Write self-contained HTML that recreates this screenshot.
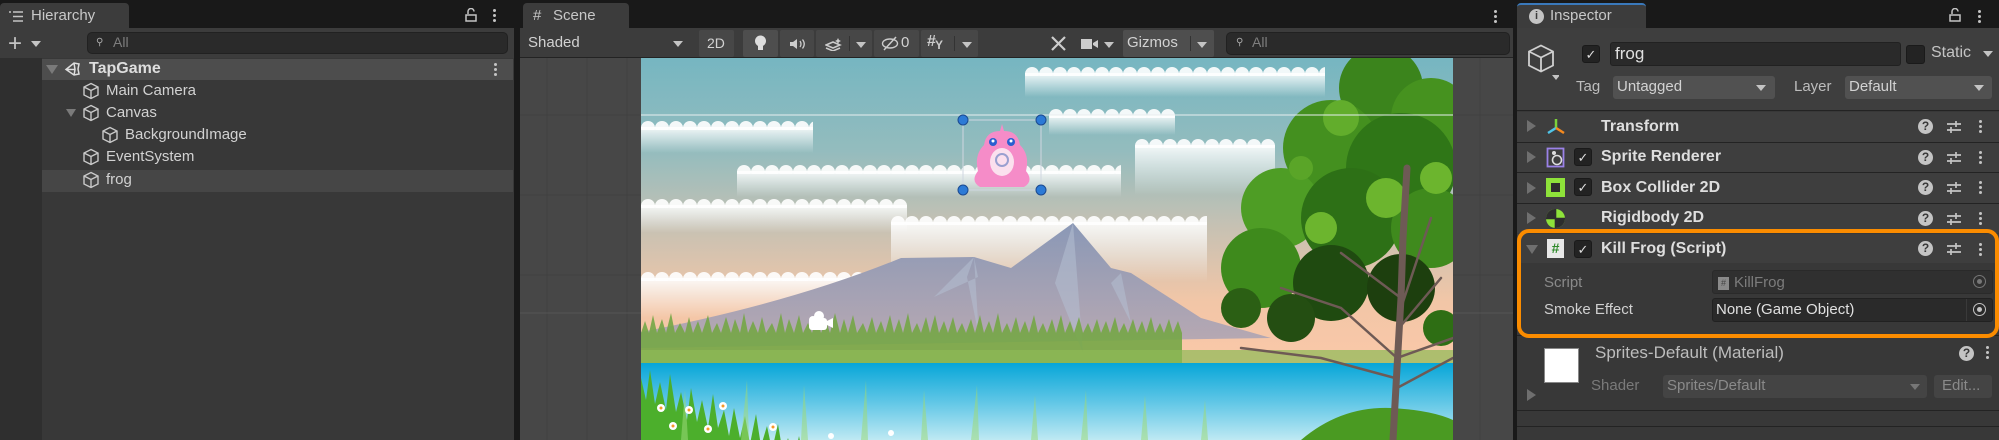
<!DOCTYPE html>
<html><head><meta charset="utf-8"><style>
*{box-sizing:border-box;margin:0;padding:0}
html,body{width:1999px;height:440px;overflow:hidden}
body{background:#191919;font-family:"Liberation Sans",sans-serif;color:#d2d2d2;font-size:14px;position:relative}
.abs{position:absolute}
.panel{position:absolute;background:#383838}
.tabbar{position:absolute;top:0;height:28px;background:#191919}
.tab{position:absolute;top:3px;height:26px;background:#3c3c3c;border-radius:4px 4px 0 0;font-size:15px;line-height:25px;color:#c8c8c8}
.row{position:absolute;left:0;height:22px;line-height:22px;font-size:15px;color:#d2d2d2}
.cube{position:absolute;width:18px;height:18px}
.btn{position:absolute;top:30px;height:27px;background:#474747;border-radius:2px}
.ctext{font-weight:bold;font-size:16px;color:#dedede}
.chk{position:absolute;width:18px;height:18px;background:#232323;border:1px solid #1a1a1a;border-radius:3px;color:#ddd;font-size:13px;line-height:17px;text-align:center}
.line{position:absolute;height:1px;background:#232323}
.dots{position:absolute;width:4px}
.dots i{display:block;width:3px;height:3px;border-radius:50%;background:#c4c4c4;margin:2px 0}
.q{position:absolute;width:15px;height:15px;border-radius:50%;background:#c4c4c4;color:#383838;font-size:12px;font-weight:bold;text-align:center;line-height:15px}
</style></head><body>

<!-- ============ HIERARCHY ============ -->
<div class="panel" style="left:0;top:0;width:514px;height:440px"></div>
<div class="tabbar" style="left:0;width:514px"></div>
<div class="tab" style="left:0;width:129px;background:#3c3c3c">
 <svg class="abs" style="left:9px;top:8px" width="14" height="11"><g stroke="#c4c4c4" stroke-width="1.5"><line x1="0" y1="1" x2="2" y2="1"/><line x1="4" y1="1" x2="14" y2="1"/><line x1="4" y1="5.5" x2="14" y2="5.5"/><line x1="4" y1="10" x2="14" y2="10"/></g></svg>
 <span class="abs" style="left:31px">Hierarchy</span></div>
<svg class="abs" style="left:465px;top:8px" width="12" height="14"><path d="M3 6V3.5a3 3 0 0 1 6 0" fill="none" stroke="#c4c4c4" stroke-width="1.5"/><rect x="1" y="7" width="10" height="6" fill="none" stroke="#c4c4c4" stroke-width="1.5"/></svg>
<div class="dots" style="left:493px;top:7px"><i></i><i></i><i></i></div>
<div class="abs" style="left:0;top:28px;width:514px;height:30px;background:#3c3c3c"></div>
<div class="abs" style="left:8px;top:34px;font-size:24px;line-height:20px;color:#c4c4c4">+</div>
<div class="abs" style="left:31px;top:41px;width:0;height:0;border-left:5px solid transparent;border-right:5px solid transparent;border-top:6px solid #c4c4c4"></div>
<div class="abs" style="left:87px;top:32px;width:421px;height:22px;background:#2a2a2a;border:1px solid #212121;border-radius:5px"></div>
<div class="abs" style="left:96px;top:37px;font-size:10px;color:#aaa">⚲</div>
<div class="abs" style="left:113px;top:34px;font-size:14px;color:#7e7e7e">All</div>
<div class="abs" style="left:0;top:58px;width:42px;height:382px;background:#2f2f2f"></div>
<div class="abs" style="left:42px;top:59px;width:471px;height:21px;background:#4d4d4d"></div>
<div class="abs" style="left:42px;top:170px;width:471px;height:22px;background:#464646"></div>
<div class="abs" style="left:46px;top:65px;border-left:6px solid transparent;border-right:6px solid transparent;border-top:9px solid #7a7a7a"></div>
<svg class="abs" style="left:64px;top:61px" width="17" height="17"><path d="M2 8.5L10 2l5 1-1 5 1 5-5 1z M2 8.5h9 M10 2l1 6.5-1 6" fill="none" stroke="#ddd" stroke-width="1.5"/></svg>
<div class="row ctext" style="left:89px;top:58px">TapGame</div>
<div class="dots" style="left:494px;top:61px"><i></i><i></i><i></i></div>
<svg width="0" height="0" style="position:absolute"><defs><symbol id="cb" viewBox="0 0 18 18"><path d="M9 1.5l7 3.5v8l-7 3.5-7-3.5v-8z M2 5l7 3.5 7-3.5 M9 8.5v8" fill="none" stroke="#c9c9c9" stroke-width="1.4"/></symbol></defs></svg>
<svg class="cube" style="left:82px;top:82px"><use href="#cb"/></svg><div class="row" style="left:106px;top:80px">Main Camera</div>
<div class="abs" style="left:66px;top:109px;border-left:5px solid transparent;border-right:5px solid transparent;border-top:8px solid #7a7a7a"></div>
<svg class="cube" style="left:82px;top:104px"><use href="#cb"/></svg><div class="row" style="left:106px;top:102px">Canvas</div>
<svg class="cube" style="left:101px;top:126px"><use href="#cb"/></svg><div class="row" style="left:125px;top:124px">BackgroundImage</div>
<svg class="cube" style="left:82px;top:148px"><use href="#cb"/></svg><div class="row" style="left:106px;top:146px">EventSystem</div>
<svg class="cube" style="left:82px;top:171px"><use href="#cb"/></svg><div class="row" style="left:106px;top:169px">frog</div>

<!-- ============ SCENE ============ -->
<div class="panel" style="left:520px;top:0;width:993px;height:440px;background:#474747"></div>
<div class="tabbar" style="left:520px;width:993px"></div>
<div class="tab" style="left:523px;width:106px">
 <span class="abs" style="left:10px;top:0;font-size:15px">#</span><span class="abs" style="left:30px">Scene</span></div>
<div class="dots" style="left:1494px;top:8px"><i></i><i></i><i></i></div>
<div class="abs" style="left:520px;top:28px;width:993px;height:30px;background:#3c3c3c;border-bottom:1px solid #232323"></div>
<div class="abs" style="left:528px;top:34px;font-size:15px">Shaded</div>
<div class="abs" style="left:673px;top:41px;border-left:5px solid transparent;border-right:5px solid transparent;border-top:6px solid #c4c4c4"></div>
<div class="btn" style="left:699px;width:35px"><span class="abs" style="left:8px;top:5px;font-size:14px">2D</span></div>
<div class="btn" style="left:743px;width:35px;background:#4e4e4e"><svg class="abs" style="left:11px;top:5px" width="13" height="17"><circle cx="6.5" cy="6" r="5.5" fill="#ddd"/><rect x="4" y="11" width="5" height="4" fill="#ddd"/></svg></div>
<div class="btn" style="left:780px;width:34px"><svg class="abs" style="left:9px;top:8px" width="17" height="12"><path d="M1 4h3l4-3v10l-4-3H1z" fill="#ccc"/><path d="M11 3q2 3 0 6M13.5 1.5q3.5 4.5 0 9" stroke="#ccc" fill="none" stroke-width="1.3"/></svg></div>
<div class="btn" style="left:816px;width:56px"><svg class="abs" style="left:9px;top:7px" width="20" height="14"><path d="M1 8l7-3 7 3-7 3z M1 11l7 3 7-3" fill="none" stroke="#ccc" stroke-width="1.5"/><path d="M13 1l1 2 2 1-2 1-1 2-1-2-2-1 2-1z" fill="#ccc"/></svg><div class="abs" style="left:33px;top:6px;width:1px;height:15px;background:#333"></div><div class="abs" style="left:40px;top:12px;border-left:5px solid transparent;border-right:5px solid transparent;border-top:6px solid #c4c4c4"></div></div>
<div class="btn" style="left:874px;width:45px"><svg class="abs" style="left:7px;top:6px" width="18" height="15"><ellipse cx="9" cy="7.5" rx="7.5" ry="4.5" fill="none" stroke="#ccc" stroke-width="1.4"/><line x1="3" y1="14" x2="15" y2="1" stroke="#ccc" stroke-width="1.5"/></svg><span class="abs" style="left:27px;top:4px;font-size:15px">0</span></div>
<div class="btn" style="left:921px;width:57px"><span class="abs" style="left:6px;top:3px;font-size:16px;font-weight:bold;color:#ccc">#</span><span class="abs" style="left:14px;top:8px;font-size:12px;font-weight:bold;color:#ccc">Y</span><div class="abs" style="left:33px;top:6px;width:1px;height:15px;background:#333"></div><div class="abs" style="left:41px;top:12px;border-left:5px solid transparent;border-right:5px solid transparent;border-top:6px solid #c4c4c4"></div></div>
<div class="btn" style="left:1045px;width:27px;background:#3c3c3c"><svg class="abs" style="left:5px;top:5px" width="17" height="17"><path d="M2 2l13 13M15 2L2 15" stroke="#ccc" stroke-width="2.2"/></svg></div>
<div class="btn" style="left:1075px;width:46px;background:#3c3c3c"><svg class="abs" style="left:6px;top:8px" width="18" height="12"><rect x="0" y="1" width="11" height="10" fill="#ccc"/><path d="M12 5l5-3v8l-5-3z" fill="#ccc"/></svg><div class="abs" style="left:29px;top:12px;border-left:5px solid transparent;border-right:5px solid transparent;border-top:6px solid #c4c4c4"></div></div>
<div class="btn" style="left:1123px;width:91px;background:#4e4e4e"><span class="abs" style="left:4px;top:4px;font-size:15px">Gizmos</span><div class="abs" style="left:67px;top:6px;width:1px;height:15px;background:#333"></div><div class="abs" style="left:74px;top:12px;border-left:5px solid transparent;border-right:5px solid transparent;border-top:6px solid #c4c4c4"></div></div>
<div class="abs" style="left:1226px;top:32px;width:284px;height:23px;background:#2a2a2a;border:1px solid #212121;border-radius:5px"></div>
<div class="abs" style="left:1236px;top:37px;font-size:10px;color:#aaa">⚲</div>
<div class="abs" style="left:1252px;top:34px;font-size:14px;color:#7e7e7e">All</div>

<svg class="abs" style="left:520px;top:58px" width="993" height="382">
 <g stroke="#414141" stroke-width="1">
  <line x1="27" y1="0" x2="27" y2="382"/><line x1="67" y1="0" x2="67" y2="382"/><line x1="107" y1="0" x2="107" y2="382"/>
  <line x1="960" y1="0" x2="960" y2="382"/>
  <line x1="0" y1="57" x2="993" y2="57"/><line x1="0" y1="137" x2="993" y2="137"/><line x1="0" y1="217" x2="993" y2="217"/>
 </g>
 <line x1="0" y1="255" x2="993" y2="255" stroke="#555"/>
</svg>

<!-- scene image -->
<svg class="abs" style="left:641px;top:58px" width="812" height="382" viewBox="0 0 812 382">
 <defs>
  <linearGradient id="sky" x1="0" y1="0" x2="0" y2="1">
   <stop offset="0" stop-color="#76b6c1"/><stop offset="0.3" stop-color="#93bcbe"/><stop offset="0.55" stop-color="#c6c1b3"/><stop offset="0.8" stop-color="#f2c6a7"/><stop offset="1" stop-color="#fac8a8"/>
  </linearGradient>
  <linearGradient id="lake" x1="0" y1="0" x2="0" y2="1"><stop offset="0" stop-color="#07a6d8"/><stop offset="0.5" stop-color="#5fc6e6"/><stop offset="1" stop-color="#bfe9f3"/></linearGradient>
  <linearGradient id="cl" x1="0" y1="0" x2="0" y2="1"><stop offset="0" stop-color="#fff" stop-opacity=".9"/><stop offset="1" stop-color="#fff" stop-opacity="0"/></linearGradient>
  <linearGradient id="mt" x1="0" y1="0" x2="0" y2="1"><stop offset="0" stop-color="#8a98b6"/><stop offset="1" stop-color="#b9a9b2"/></linearGradient>
  <pattern id="bump" width="14" height="24" patternUnits="userSpaceOnUse"><circle cx="7" cy="8" r="7" fill="#fff" fill-opacity=".9"/></pattern>
 </defs>
 <rect width="812" height="305" fill="url(#sky)"/>
 <!-- clouds: bumps + fading body -->
 <g transform="translate(384 8)"><rect width="300" height="10" fill="url(#bump)"/><rect y="7" width="300" height="24" fill="url(#cl)"/></g>
 <g transform="translate(0 62)"><rect width="172" height="10" fill="url(#bump)"/><rect y="7" width="172" height="26" fill="url(#cl)"/></g>
 <g transform="translate(408 50)"><rect width="126" height="10" fill="url(#bump)"/><rect y="7" width="126" height="20" fill="url(#cl)"/></g>
 <g transform="translate(96 106)"><rect width="384" height="10" fill="url(#bump)"/><rect y="7" width="384" height="26" fill="url(#cl)"/></g>
 <g transform="translate(0 140)"><rect width="266" height="10" fill="url(#bump)"/><rect y="7" width="266" height="28" fill="url(#cl)"/></g>
 <g transform="translate(494 80)"><rect width="140" height="10" fill="url(#bump)"/><rect y="7" width="140" height="50" fill="url(#cl)"/></g>
 <g transform="translate(250 157)"><rect width="316" height="10" fill="url(#bump)"/><rect y="7" width="316" height="60" fill="url(#cl)"/></g>
 <g transform="translate(0 213)"><rect width="250" height="10" fill="url(#bump)"/><rect y="7" width="250" height="40" fill="url(#cl)"/></g>
 <!-- mountains -->
 <path d="M0 274 Q150 245 260 200 L333 199 L370 210 L432 165 L470 210 L490 215 L560 260 L630 280 L0 290z" fill="url(#mt)"/>
 <path d="M333 199 l-40 40 44-20z M432 165 l-18 60 28 70z M480 215 l10 50 -20-40z M333 199 l5 80 -12-60z" fill="#b4bfd2" opacity=".55"/>
 <!-- treeline -->
 <path d="M0 305 V275 l4-12 4 12 4-18 4 18 5-14 4 14 5-20 4 20 5-10 5 10 4-16 4 16 5-12 4 12 6-18 4 18 5-10 4 10 5-16 5 16 4-14 5 14 4-20 4 20 5-12 5 12 4-16 4 16 6-10 4 10 5-20 4 20 4-14 5 14 5-18 4 18 5-10 4 10 5-16 4 16 5-12 4 12 5-20 5 20 4-14 4 14 5-18 4 18 6-10 4 10 5-16 4 16 5-12 4 12 5-18 4 18 5-14 4 14 5-20 4 20 5-10 4 10 5-16 4 16 5-18 4 18 5-12 4 12 5-16 4 16 5-10 4 10 5-14 4 14 5-18 4 18 5-12 4 12 5-20 4 20 5-10 4 10 5-16 4 16 5-12 4 12 5-18 4 18 5-10 4 10 5-14 4 14 5-18 4 18 5-12 4 12 5-16 4 16 5-10 4 10 5-14 4 14 5-12 4 12 5-16 4 16 5-10 4 10 5-14 4 14 5-12 4 12 5-16 4 16 5-10 4 10 5-14 4 14 5-12 4 12 V305z" fill="#74a646" opacity=".9"/>
 <rect y="292" width="812" height="13" fill="#8db955" opacity=".7"/>
 <!-- lake -->
 <rect y="305" width="812" height="77" fill="url(#lake)"/>
 <!-- foreground grass -->
 <path d="M0 382 V320 l5 22 4-30 5 34 5-22 6 28 4-36 6 38 5-20 6 28 4-32 6 34 5-22 6 28 5-34 5 34 6-18 5 26 5-28 6 30 5-22 5 28 6-30 5 32 6-20 5 24 6-26 5 30 5-16 6 22 5-24 6 30 4-20 6 26 5-30 5 34 6-20 5 24 5-26 6 28 5-14 6 20 5-18 6 22 V382z" fill="#4caf2c"/>
 <path d="M40 382 l4-50 3 50z M100 382 l6-60 2 60z M160 382 l3-55 4 55z M220 382 l5-60 2 60z M280 382 l3-50 4 50z M330 382 l6-55 2 55z M390 382 l4-45 3 45z M440 382 l5-50 2 50z M500 382 l4-45 3 45z M560 382 l4-40 3 40z" fill="#9ad87a" opacity=".55"/>
 <g fill="#fff"><circle cx="20" cy="350" r="4"/><circle cx="48" cy="352" r="4"/><circle cx="82" cy="348" r="4"/><circle cx="32" cy="368" r="4"/><circle cx="67" cy="371" r="4"/><circle cx="132" cy="369" r="4"/><circle cx="190" cy="378" r="3"/><circle cx="250" cy="375" r="3"/></g>
 <g fill="#f59a2a"><circle cx="20" cy="350" r="1.5"/><circle cx="48" cy="352" r="1.5"/><circle cx="82" cy="348" r="1.5"/><circle cx="32" cy="368" r="1.5"/><circle cx="67" cy="371" r="1.5"/><circle cx="132" cy="369" r="1.5"/></g>
 <path d="M660 382 q40-34 90-32 q40 2 62 12 v20z" fill="#4a9a22"/>
 <!-- tree canopy -->
 <g>
  <circle cx="740" cy="30" r="42" fill="#3b841c"/>
  <circle cx="790" cy="60" r="40" fill="#46921f"/>
  <circle cx="690" cy="90" r="48" fill="#44901f"/>
  <circle cx="760" cy="110" r="55" fill="#2f7617"/>
  <circle cx="640" cy="150" r="40" fill="#4e9d25"/>
  <circle cx="710" cy="160" r="50" fill="#2d7016"/>
  <circle cx="790" cy="170" r="40" fill="#3f8a1d"/>
  <circle cx="620" cy="210" r="40" fill="#3e8a1c"/>
  <circle cx="690" cy="225" r="38" fill="#1f4a10"/>
  <circle cx="760" cy="230" r="34" fill="#1d3f0e"/>
  <circle cx="600" cy="250" r="20" fill="#2b5f14"/>
  <circle cx="650" cy="260" r="24" fill="#244e12"/>
  <circle cx="800" cy="270" r="18" fill="#2e6e14"/>
  <circle cx="700" cy="60" r="18" fill="#62ad2c"/>
  <circle cx="745" cy="140" r="20" fill="#6cb52e"/>
  <circle cx="680" cy="170" r="16" fill="#6cb52e"/>
  <circle cx="795" cy="120" r="16" fill="#6cb52e"/>
  <circle cx="660" cy="110" r="12" fill="#5aa528"/>
 </g>
 <g stroke="#6e5a55" fill="none" stroke-linecap="round">
  <path d="M752 382 L756 310 L760 240 L762 180 L766 110" stroke-width="7"/>
  <path d="M756 300 L700 250 L640 230 M758 270 L800 220 M760 240 L700 195 M756 330 L812 300 M754 320 L680 300 L600 290 M760 250 L790 160 M756 300 L812 280" stroke-width="2.5"/>
 </g>
 <line x1="0" y1="57" x2="812" y2="57" stroke="#e8eef0" stroke-width="1.2" opacity=".8"/>
 <!-- frog -->
 <g transform="translate(322 62)">
  <rect x="0" y="0" width="78" height="70" fill="none" stroke="#cfd6e0" stroke-width="1"/>
  <path d="M39 4 l2 7 q14 0 16 14 q10 10 6 26 q8 10-2 16 h-44 q-10-6-2-16 q-4-16 6-26 q2-14 16-14z" fill="#f58cc8"/>
  <ellipse cx="39" cy="42" rx="12" ry="14" fill="#fbe0ee"/>
  <circle cx="39" cy="40" r="6" fill="none" stroke="#9aa0d0" stroke-width="2"/>
  <circle cx="30" cy="22" r="4" fill="#2a5fd0"/><circle cx="48" cy="22" r="4" fill="#2a5fd0"/>
  <circle cx="30" cy="21" r="1.5" fill="#fff"/><circle cx="48" cy="21" r="1.5" fill="#fff"/>
  <g fill="#2c7ad6" stroke="#1c4a90"><circle cx="0" cy="0" r="5"/><circle cx="78" cy="0" r="5"/><circle cx="0" cy="70" r="5"/><circle cx="78" cy="70" r="5"/></g>
 </g>
 <g transform="translate(168 254)" fill="#fff"><circle cx="10" cy="4" r="5"/><circle cx="4" cy="8" r="4"/><rect x="0" y="6" width="18" height="12" rx="3"/><path d="M18 9l6-3v10l-6-3z"/></g>
</svg>

<!-- ============ INSPECTOR ============ -->
<div class="panel" style="left:1517px;top:0;width:482px;height:440px"></div>
<div class="tabbar" style="left:1513px;width:486px"></div>
<div class="tab" style="left:1517px;width:129px;border-top:2px solid #3a79bb">
 <div class="abs" style="left:12px;top:4px;width:15px;height:15px;border-radius:50%;background:#c4c4c4;color:#3c3c3c;font-size:11px;font-weight:bold;text-align:center;line-height:15px">i</div>
 <span class="abs" style="left:33px;top:-2px">Inspector</span></div>
<svg class="abs" style="left:1949px;top:8px" width="12" height="14"><path d="M3 6V3.5a3 3 0 0 1 6 0" fill="none" stroke="#c4c4c4" stroke-width="1.5"/><rect x="1" y="7" width="10" height="6" fill="none" stroke="#c4c4c4" stroke-width="1.5"/></svg>
<div class="dots" style="left:1978px;top:8px"><i></i><i></i><i></i></div>
<div class="abs" style="left:1517px;top:28px;width:482px;height:83px;background:#3e3e3e;border-bottom:1px solid #232323"></div>
<svg class="abs" style="left:1527px;top:44px" width="32" height="36"><path d="M14 1.5l12 6v14l-12 6-12-6v-14z M2 7.5l12 6 12-6 M14 13.5v14" fill="none" stroke="#d0d0d0" stroke-width="1.8"/><path d="M25 31h8l-4 5z" fill="#c4c4c4"/></svg>
<div class="chk" style="left:1582px;top:45px">✓</div>
<div class="abs" style="left:1610px;top:42px;width:291px;height:24px;background:#2a2a2a;border:1px solid #212121;border-radius:3px;font-size:17px;line-height:22px;padding-left:4px;color:#e0e0e0">frog</div>
<div class="chk" style="left:1906px;top:45px;width:19px;height:19px"></div>
<div class="abs" style="left:1931px;top:44px;font-size:16px;color:#c4c4c4">Static</div>
<div class="abs" style="left:1983px;top:51px;border-left:5px solid transparent;border-right:5px solid transparent;border-top:6px solid #c4c4c4"></div>
<div class="abs" style="left:1576px;top:78px;font-size:15px;color:#bdbdbd">Tag</div>
<div class="abs" style="left:1613px;top:76px;width:162px;height:23px;background:#515151;border-radius:3px;font-size:15px;line-height:22px;padding-left:4px">Untagged</div>
<div class="abs" style="left:1756px;top:85px;border-left:5px solid transparent;border-right:5px solid transparent;border-top:6px solid #c4c4c4"></div>
<div class="abs" style="left:1794px;top:78px;font-size:15px;color:#bdbdbd">Layer</div>
<div class="abs" style="left:1845px;top:76px;width:147px;height:23px;background:#515151;border-radius:3px;font-size:15px;line-height:22px;padding-left:4px">Default</div>
<div class="abs" style="left:1974px;top:85px;border-left:5px solid transparent;border-right:5px solid transparent;border-top:6px solid #c4c4c4"></div>

<div class="abs" style="left:1517px;top:112px;width:482px;height:30px;background:#3e3e3e"></div>
<div class="line" style="left:1517px;top:142px;width:482px"></div>
<div class="abs" style="left:1517px;top:143px;width:482px;height:29px;background:#3e3e3e"></div>
<div class="line" style="left:1517px;top:172px;width:482px"></div>
<div class="abs" style="left:1517px;top:173px;width:482px;height:30px;background:#3e3e3e"></div>
<div class="line" style="left:1517px;top:203px;width:482px"></div>
<div class="abs" style="left:1517px;top:204px;width:482px;height:29px;background:#3e3e3e"></div>
<div class="abs" style="left:1517px;top:234px;width:482px;height:29px;background:#3e3e3e"></div>
<div class="line" style="left:1517px;top:335px;width:482px"></div>
<div class="line" style="left:1517px;top:410px;width:482px"></div>
<div class="line" style="left:1517px;top:426px;width:482px"></div>

<div class="abs" style="left:1527px;top:120px;border-top:6px solid transparent;border-bottom:6px solid transparent;border-left:9px solid #6f6f6f"></div>
<div class="abs" style="left:1527px;top:151px;border-top:6px solid transparent;border-bottom:6px solid transparent;border-left:9px solid #6f6f6f"></div>
<div class="abs" style="left:1527px;top:182px;border-top:6px solid transparent;border-bottom:6px solid transparent;border-left:9px solid #6f6f6f"></div>
<div class="abs" style="left:1527px;top:212px;border-top:6px solid transparent;border-bottom:6px solid transparent;border-left:9px solid #6f6f6f"></div>
<div class="abs" style="left:1526px;top:245px;border-left:6px solid transparent;border-right:6px solid transparent;border-top:9px solid #6f6f6f"></div>
<div class="abs" style="left:1527px;top:389px;border-top:6px solid transparent;border-bottom:6px solid transparent;border-left:9px solid #6f6f6f"></div>

<svg class="abs" style="left:1546px;top:118px" width="20" height="18"><line x1="10" y1="1" x2="10" y2="10" stroke="#7cd23a" stroke-width="2.5"/><line x1="10" y1="10" x2="2" y2="15" stroke="#4fc4e8" stroke-width="2.5"/><line x1="10" y1="10" x2="18" y2="15" stroke="#f58a1f" stroke-width="2.5"/></svg>
<svg class="abs" style="left:1546px;top:147px" width="20" height="21"><rect x="1.5" y="1.5" width="16" height="18" fill="none" stroke="#9b82e8" stroke-width="1.8"/><circle cx="11" cy="13" r="4.5" fill="none" stroke="#ddd" stroke-width="1.6"/><circle cx="8" cy="6" r="2" fill="#ddd"/></svg>
<div class="chk" style="left:1574px;top:148px">✓</div>
<svg class="abs" style="left:1546px;top:178px" width="19" height="19"><rect x="0" y="0" width="19" height="19" fill="#8ee23a"/><rect x="5" y="5" width="9" height="9" fill="#2d2d2d"/></svg>
<div class="chk" style="left:1574px;top:178px">✓</div>
<svg class="abs" style="left:1545px;top:208px" width="21" height="21"><circle cx="10.5" cy="10.5" r="9.5" fill="#8ee23a"/><path d="M10.5 1v19M1 10.5h19" stroke="#2d2d2d" stroke-width="1.6"/><path d="M10.5 10.5V1A9.5 9.5 0 0 0 1 10.5z M10.5 10.5V20A9.5 9.5 0 0 0 20 10.5z" fill="#2d2d2d"/></svg>
<div class="abs" style="left:1547px;top:239px;width:17px;height:19px;background:#e8e8e8;color:#2e8a2a;font-size:14px;font-weight:bold;text-align:center;line-height:19px">#</div>
<div class="chk" style="left:1574px;top:240px">✓</div>

<div class="abs ctext" style="left:1601px;top:118px">Transform</div>
<div class="abs ctext" style="left:1601px;top:148px">Sprite Renderer</div>
<div class="abs ctext" style="left:1601px;top:179px">Box Collider 2D</div>
<div class="abs ctext" style="left:1601px;top:209px">Rigidbody 2D</div>
<div class="abs ctext" style="left:1601px;top:240px">Kill Frog (Script)</div>

<div class="q" style="left:1918px;top:119px">?</div><div class="q" style="left:1918px;top:150px">?</div><div class="q" style="left:1918px;top:180px">?</div><div class="q" style="left:1918px;top:211px">?</div><div class="q" style="left:1918px;top:241px">?</div>
<svg width="0" height="0" style="position:absolute"><defs><symbol id="sl" viewBox="0 0 16 14"><path d="M1 4h14M1 10h14M10 1v6M5 7v6" stroke="#c4c4c4" stroke-width="1.7"/></symbol></defs></svg>
<svg class="abs" style="left:1946px;top:120px" width="16" height="14"><use href="#sl"/></svg>
<svg class="abs" style="left:1946px;top:151px" width="16" height="14"><use href="#sl"/></svg>
<svg class="abs" style="left:1946px;top:181px" width="16" height="14"><use href="#sl"/></svg>
<svg class="abs" style="left:1946px;top:212px" width="16" height="14"><use href="#sl"/></svg>
<svg class="abs" style="left:1946px;top:242px" width="16" height="14"><use href="#sl"/></svg>
<div class="dots" style="left:1979px;top:118px"><i></i><i></i><i></i></div>
<div class="dots" style="left:1979px;top:149px"><i></i><i></i><i></i></div>
<div class="dots" style="left:1979px;top:179px"><i></i><i></i><i></i></div>
<div class="dots" style="left:1979px;top:210px"><i></i><i></i><i></i></div>
<div class="dots" style="left:1979px;top:241px"><i></i><i></i><i></i></div>

<div class="abs" style="left:1544px;top:274px;font-size:15px;color:#8a8a8a">Script</div>
<div class="abs" style="left:1712px;top:270px;width:281px;height:24px;background:#303030;border:1px solid #2a2a2a;border-radius:3px"></div>
<div class="abs" style="left:1718px;top:277px;width:11px;height:13px;background:#8a8a8a;color:#444;font-size:9px;line-height:13px;text-align:center">#</div>
<div class="abs" style="left:1734px;top:274px;font-size:15px;color:#7c7c7c">KillFrog</div>
<div class="abs" style="left:1973px;top:275px;width:13px;height:13px;border:1.5px solid #777;border-radius:50%"><div style="margin:2.5px;width:5px;height:5px;border-radius:50%;background:#777"></div></div>
<div class="abs" style="left:1544px;top:301px;font-size:15px;color:#d0d0d0">Smoke Effect</div>
<div class="abs" style="left:1712px;top:298px;width:281px;height:24px;background:#2a2a2a;border:1px solid #212121;border-radius:3px"></div>
<div class="abs" style="left:1716px;top:301px;font-size:15px;color:#e0e0e0">None (Game Object)</div>
<div class="abs" style="left:1966px;top:299px;width:1px;height:22px;background:#3a3a3a"></div>
<div class="abs" style="left:1973px;top:303px;width:13px;height:13px;border:1.5px solid #c4c4c4;border-radius:50%"><div style="margin:2.5px;width:5px;height:5px;border-radius:50%;background:#c4c4c4"></div></div>

<div class="abs" style="left:1517px;top:229px;width:482px;height:109px;border:4px solid #fb8c00;border-radius:12px"></div>

<div class="abs" style="left:1544px;top:348px;width:35px;height:35px;background:#fff;border:1px solid #888"></div>
<div class="abs" style="left:1595px;top:343px;font-size:17px;color:#bdbdbd">Sprites-Default (Material)</div>
<div class="q" style="left:1959px;top:346px">?</div>
<div class="dots" style="left:1986px;top:344px"><i></i><i></i><i></i></div>
<div class="abs" style="left:1591px;top:377px;font-size:15px;color:#7a7a7a">Shader</div>
<div class="abs" style="left:1663px;top:375px;width:264px;height:23px;background:#444;border-radius:3px;font-size:15px;line-height:22px;padding-left:4px;color:#8a8a8a">Sprites/Default</div>
<div class="abs" style="left:1910px;top:384px;border-left:5px solid transparent;border-right:5px solid transparent;border-top:6px solid #777"></div>
<div class="abs" style="left:1934px;top:375px;width:58px;height:23px;background:#444;border-radius:3px;font-size:15px;line-height:22px;padding-left:8px;color:#8a8a8a">Edit...</div>
</body></html>
